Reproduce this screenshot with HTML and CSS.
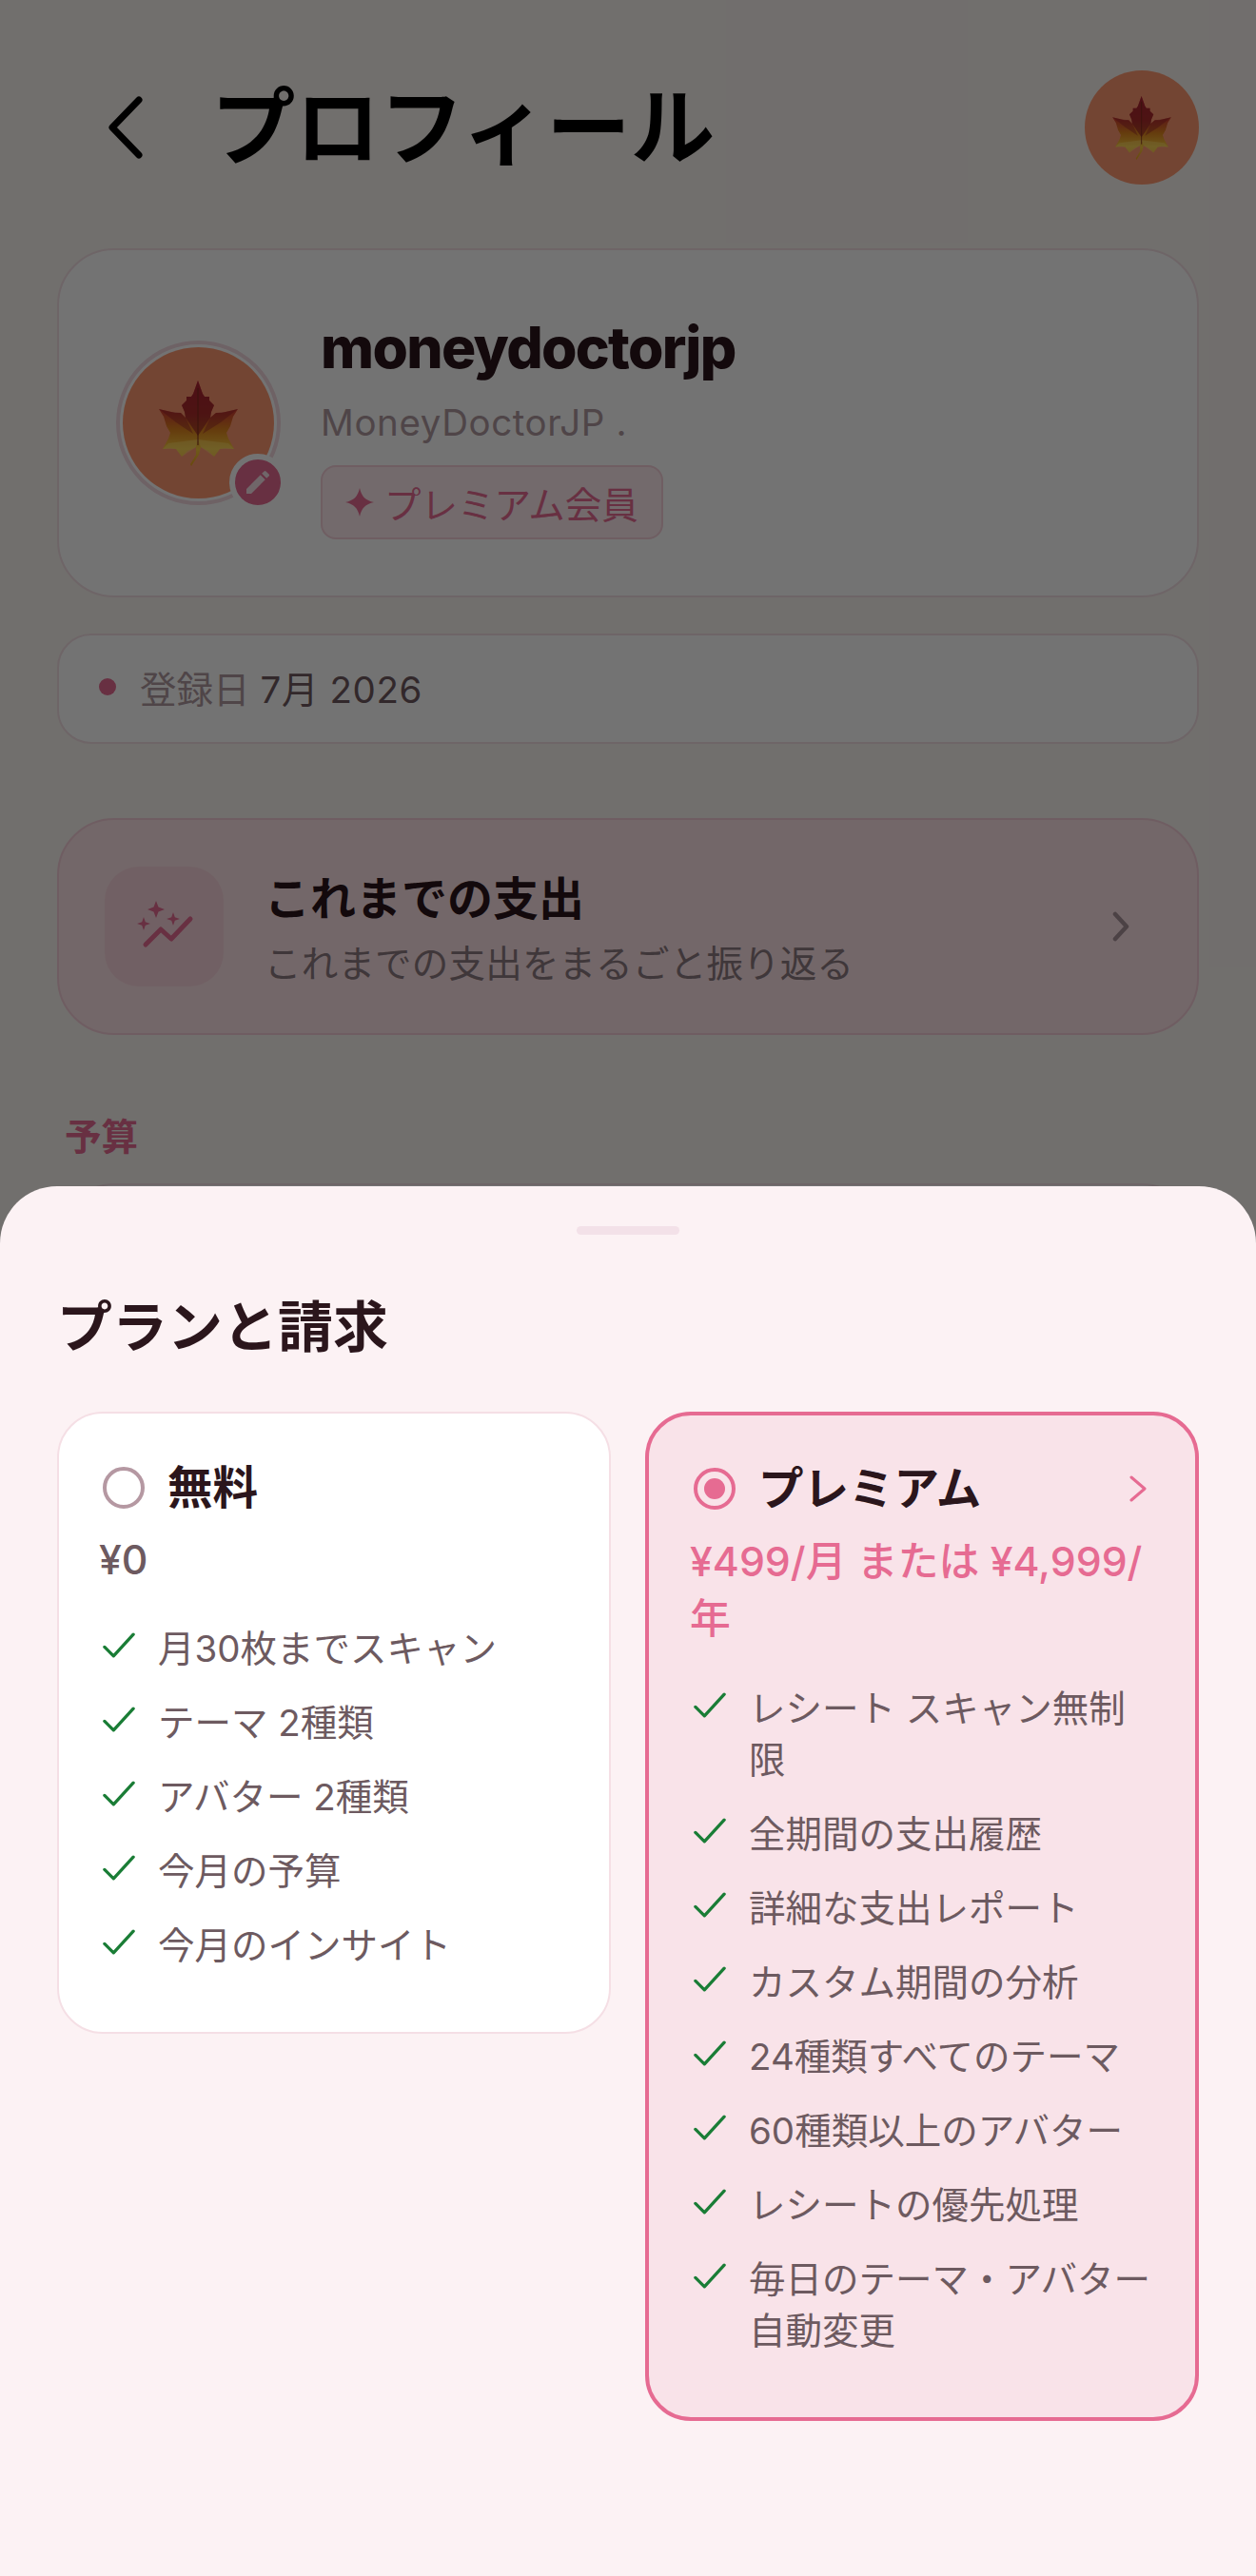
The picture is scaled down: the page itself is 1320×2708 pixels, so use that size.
FILE: index.html
```html
<!DOCTYPE html>
<html lang="ja">
<head>
	<meta charset="utf-8" />
	<title>プロフィール</title>
	<link rel="stylesheet" href="styles.css">
</head>
<body>
	<svg class="defs" width="0" height="0">
		<defs>
			<linearGradient id="leafFill" x1="0" y1="0" x2="0" y2="1">
				<stop offset="0" stop-color="#d8303f" />
				<stop offset=".38" stop-color="#d2452f" />
				<stop offset=".58" stop-color="#e0861f" />
				<stop offset=".8" stop-color="#f6c83e" />
				<stop offset="1" stop-color="#e8a020" />
			</linearGradient>
			<symbol id="leaf" viewBox="0 0 83 90">
				<path fill="url(#leafFill)" d="M41 0 46 14 48 17 53 17 53 21 58 26 55 33 54 39 60 34 66 34 70 33 83 30 78 38 75 48 71 55 73 61 79 72 70 71 64 72 58 80 52 74 44 70 42 78 36 87 34 90 33 88 39 78 39 70 30 74 24 80 18 72 12 71 4 72 10 61 12 55 8 48 5 38 0 30 13 33 17 34 23 34 28 39 27 33 24 26 29 21 29 17 34 17 36 14Z" />
				<path fill="#8f1a2a" opacity=".6" d="M41 0 46 14 48 17 53 17 53 21 58 26 55 33 54 39 41 58 28 39 27 33 24 26 29 21 29 17 34 17 36 14Z" />
				<path fill="#8f1a2a" opacity=".4" d="M0 30 13 33 23 34 28 39 36 56 18 44ZM83 30 70 33 60 34 54 39 46 56 65 44Z" />
				<path fill="#ffe070" opacity=".45" d="M41 62 73 66 79 72 64 72 58 80 44 70ZM41 62 10 66 4 72 18 72 24 80 39 70Z" />
				<path fill="none" stroke="#7a2a1c" stroke-width="1" d="M41 8V68" />
			</symbol>
		</defs>
	</svg>

	<main class="page">
		<header class="top">
			<svg class="back" viewBox="0 0 44 66"><path d="M36 4 8 33 36 62" /></svg>
			<h1 class="top-title">プロフィール</h1>
			<div class="avatar-small"><svg class="leaf-small"><use href="#leaf" /></svg></div>
		</header>

		<section class="card profile">
			<div class="avatar-ring">
				<div class="avatar-big"><svg class="leaf-big"><use href="#leaf" /></svg></div>
				<div class="edit-badge">
					<svg viewBox="0 0 24 24"><path d="M3 17.25V21h3.75L17.81 9.94l-3.75-3.75L3 17.25zM20.71 7.04a1 1 0 0 0 0-1.41l-2.34-2.34a1 1 0 0 0-1.41 0l-1.83 1.83 3.75 3.75 1.83-1.83z" /></svg>
				</div>
			</div>
			<div class="profile-info">
				<div class="profile-name">moneydoctorjp</div>
				<div class="profile-id">MoneyDoctorJP .</div>
				<div class="member-badge">
					<svg viewBox="0 0 30 30"><path d="M15 0C17 9 21 13 30 15 21 17 17 21 15 30 13 21 9 17 0 15 9 13 13 9 15 0Z" /></svg>
					<span>プレミアム会員</span>
				</div>
			</div>
		</section>

		<section class="card joined">
			<span class="joined-dot"></span>
			<span class="joined-label">登録日</span>
			<span class="joined-date">7月 2026</span>
		</section>

		<section class="card history">
			<div class="history-icon">
				<svg viewBox="0 0 64 64">
					<path class="spark" d="M23 5 25.500 11.500 32 14 25.500 16.500 23 23 20.500 16.500 14 14 20.500 11.500Z" />
					<path class="spark" d="M10 22 11.800 27.200 17 29 11.800 30.800 10 36 8.200 30.800 3 29 8.200 27.200Z" />
					<path class="spark" d="M41 17 42.800 22.200 48 24 42.800 25.800 41 31 39.200 25.800 34 24 39.200 22.200Z" />
					<path class="trend" d="M12 51 28 35 39 45 59 24" />
				</svg>
			</div>
			<div class="history-text">
				<div class="history-title">これまでの支出</div>
				<div class="history-sub">これまでの支出をまるごと振り返る</div>
			</div>
			<svg class="history-arrow" viewBox="0 0 18 32"><path d="M3 3 15 16 3 29" /></svg>
		</section>

		<h2 class="section-label">予算</h2>
		<section class="card budget"></section>
	</main>

	<div class="dim"></div>

	<aside class="sheet">
		<div class="handle"></div>
		<h2 class="sheet-title">プランと請求</h2>
		<div class="plans">
			<div class="plan">
				<div class="plan-head">
					<span class="radio"></span>
					<span class="plan-name">無料</span>
				</div>
				<div class="plan-price">¥0</div>
				<ul class="features">
					<li><svg class="check" viewBox="0 0 36 28"><path d="M2 16 12 26 34 2" /></svg><span>月30枚までスキャン</span></li>
					<li><svg class="check" viewBox="0 0 36 28"><path d="M2 16 12 26 34 2" /></svg><span>テーマ 2種類</span></li>
					<li><svg class="check" viewBox="0 0 36 28"><path d="M2 16 12 26 34 2" /></svg><span>アバター 2種類</span></li>
					<li><svg class="check" viewBox="0 0 36 28"><path d="M2 16 12 26 34 2" /></svg><span>今月の予算</span></li>
					<li><svg class="check" viewBox="0 0 36 28"><path d="M2 16 12 26 34 2" /></svg><span>今月のインサイト</span></li>
				</ul>
			</div>
			<div class="plan plan-active">
				<div class="plan-head">
					<span class="radio radio-on"></span>
					<span class="plan-name">プレミアム</span>
					<svg class="plan-arrow" viewBox="0 0 18 28"><path d="M2 2 16 14 2 26" /></svg>
				</div>
				<div class="plan-price">¥499/月 または ¥4,999/年</div>
				<ul class="features">
					<li><svg class="check" viewBox="0 0 36 28"><path d="M2 16 12 26 34 2" /></svg><span>レシート スキャン無制限</span></li>
					<li><svg class="check" viewBox="0 0 36 28"><path d="M2 16 12 26 34 2" /></svg><span>全期間の支出履歴</span></li>
					<li><svg class="check" viewBox="0 0 36 28"><path d="M2 16 12 26 34 2" /></svg><span>詳細な支出レポート</span></li>
					<li><svg class="check" viewBox="0 0 36 28"><path d="M2 16 12 26 34 2" /></svg><span>カスタム期間の分析</span></li>
					<li><svg class="check" viewBox="0 0 36 28"><path d="M2 16 12 26 34 2" /></svg><span>24種類すべてのテーマ</span></li>
					<li><svg class="check" viewBox="0 0 36 28"><path d="M2 16 12 26 34 2" /></svg><span>60種類以上のアバター</span></li>
					<li><svg class="check" viewBox="0 0 36 28"><path d="M2 16 12 26 34 2" /></svg><span>レシートの優先処理</span></li>
					<li><svg class="check" viewBox="0 0 36 28"><path d="M2 16 12 26 34 2" /></svg><span>毎日のテーマ・アバター自動変更</span></li>
				</ul>
			</div>
		</div>
	</aside>
</body>
</html>
```

FILE: styles.css
```css
* {
	padding: 0;
	margin: 0;
	box-sizing: border-box;
}
html, body {
	width: 1320px;
	height: 2708px;
	overflow: hidden;
}
body {
	position: relative;
	background: #fbf5f1;
	font-family: Inter, "Noto Sans CJK JP", sans-serif;
	color: #2b161c;
}
li {
	list-style: none;
}
.defs {
	position: absolute;
}

/* page under the sheet */
.page {
	padding: 74px 60px 0;
}
.top {
	display: flex;
	align-items: center;
	height: 120px;
	margin-bottom: 67px;
}
.back {
	width: 44px;
	height: 66px;
	margin-left: 50px;
	fill: none;
	stroke: #000;
	stroke-width: 7;
	stroke-linecap: round;
	stroke-linejoin: round;
}
.top-title {
	margin-left: 68px;
	font-size: 88.5px;
	font-weight: 700;
	line-height: 120px;
	color: #000;
}
.avatar-small {
	display: flex;
	align-items: center;
	justify-content: center;
	width: 120px;
	height: 120px;
	margin-left: auto;
	border-radius: 50%;
	background: #ff9a72;
}
.leaf-small {
	width: 62px;
	height: 67px;
}
.card {
	border: 2px solid #f3e0e5;
	background: #fff;
}
.profile {
	display: flex;
	align-items: center;
	height: 367px;
	padding: 0 0 0 60px;
	border-radius: 60px;
}
.avatar-ring {
	position: relative;
	flex: none;
	width: 173px;
	height: 173px;
	padding: 2px;
	border: 4px solid #f4d9e0;
	border-radius: 50%;
}
.avatar-big {
	display: flex;
	align-items: center;
	justify-content: center;
	width: 159px;
	height: 159px;
	margin: 1px;
	border-radius: 50%;
	background: #ff9a72;
}
.leaf-big {
	width: 83px;
	height: 90px;
}
.edit-badge {
	position: absolute;
	right: -10px;
	bottom: -10px;
	display: flex;
	align-items: center;
	justify-content: center;
	width: 60px;
	height: 60px;
	border: 6px solid #fff;
	border-radius: 50%;
	background: #e66b92;
}
.edit-badge svg {
	width: 32px;
	height: 32px;
	fill: #f9e3e9;
}
.profile-info {
	margin-left: 42px;
	padding-top: 8px;
}
.profile-name {
	font-size: 60.5px;
	font-weight: 800;
	line-height: 70px;
	letter-spacing: -1.7px;
}
.profile-id {
	margin-top: 21px;
	font-size: 38.5px;
	line-height: 46px;
	letter-spacing: .6px;
	color: #b09aa0;
}
.member-badge {
	display: flex;
	align-items: center;
	gap: 11px;
	width: 360px;
	height: 78px;
	margin-top: 22px;
	padding-left: 24px;
	border: 2px solid #f5d0da;
	border-radius: 16px;
	background: #ffeaef;
	font-size: 38.5px;
	color: #e66b92;
}
.member-badge svg {
	flex: none;
	width: 30px;
	height: 30px;
	fill: #e66b92;
}
.joined {
	display: flex;
	align-items: center;
	height: 116px;
	margin-top: 38px;
	padding: 0 0 5px 42px;
	border-radius: 36px;
	font-size: 38.5px;
}
.joined-dot {
	width: 18px;
	height: 18px;
	margin-right: 25px;
	border-radius: 50%;
	background: #e66b92;
}
.joined-label {
	color: #b09aa0;
}
.joined-date {
	margin-left: 11px;
	font-weight: 400;
	letter-spacing: .6px;
	color: #6f5a60;
}
.history {
	display: flex;
	align-items: center;
	height: 228px;
	margin-top: 78px;
	padding: 0 71px 0 48px;
	border-color: #f5cfd9;
	border-radius: 60px;
	background: #ffe4e8;
}
.history-icon {
	display: flex;
	align-items: center;
	justify-content: center;
	flex: none;
	width: 125px;
	height: 126px;
	border-radius: 36px;
	background: #fbd6de;
}
.history-icon svg {
	width: 64px;
	height: 64px;
}
.spark {
	fill: #e66b92;
}
.trend {
	fill: none;
	stroke: #e66b92;
	stroke-width: 5;
	stroke-linecap: round;
	stroke-linejoin: round;
}
.history-text {
	flex: 1;
	margin-left: 43px;
	padding-top: 5px;
}
.history-title {
	font-size: 48px;
	font-weight: 700;
	line-height: 62px;
}
.history-sub {
	margin-top: 11px;
	font-size: 38.5px;
	line-height: 52px;
	letter-spacing: .2px;
	color: #8d7a80;
}
.history-arrow {
	flex: none;
	width: 18px;
	height: 32px;
	fill: none;
	stroke: #a8929a;
	stroke-width: 4.5;
	stroke-linecap: round;
	stroke-linejoin: round;
}
.section-label {
	margin: 82px 0 0 8px;
	font-size: 38.5px;
	font-weight: 700;
	line-height: 50px;
	color: #e66b92;
}
.budget {
	height: 300px;
	margin-top: 24px;
	border-radius: 60px;
}

.dim {
	position: absolute;
	inset: 0;
	background: rgba(0, 0, 0, .55);
}

/* bottom sheet */
.sheet {
	position: absolute;
	left: 0;
	right: 0;
	bottom: 0;
	height: 1461px;
	padding: 42px 60px 0;
	border-radius: 60px 60px 0 0;
	background: #fcf2f4;
}
.handle {
	width: 108px;
	height: 9px;
	margin: 0 auto;
	border-radius: 5px;
	background: #f3e1e8;
}
.sheet-title {
	margin-top: 58px;
	font-size: 58px;
	font-weight: 700;
	line-height: 78px;
}
.plans {
	display: grid;
	grid-template-columns: 582px 582px;
	gap: 36px;
	align-items: start;
	margin-top: 50px;
}
.plan {
	height: 654px;
	padding: 48px 42px 0;
	border: 2px solid #f5dfe5;
	border-radius: 48px;
	background: #fff;
}
.plan-active {
	height: 1061px;
	padding: 47px 43px 0;
	border: 4px solid #e66b92;
	background: #f9e3e9;
}
.plan-head {
	display: flex;
	align-items: center;
	height: 60px;
}
.radio {
	flex: none;
	width: 44px;
	height: 44px;
	margin-left: 4px;
	border: 4px solid #b598a2;
	border-radius: 50%;
}
.radio-on {
	padding: 7px;
	border-color: #e66b92;
	background: #e66b92;
	background-clip: content-box;
}
.plan-name {
	margin-left: 24px;
	font-size: 47.5px;
	font-weight: 700;
	line-height: 60px;
}
.plan-arrow {
	width: 18px;
	height: 28px;
	margin-left: auto;
	margin-right: 8px;
	fill: none;
	stroke: #e66b92;
	stroke-width: 3;
	stroke-linecap: round;
	stroke-linejoin: round;
}
.plan-price {
	margin-top: 16px;
	font-size: 42.8px;
	font-weight: 500;
	line-height: 60px;
	color: #6d5a60;
}
.plan-active .plan-price {
	margin-top: 17px;
	color: #e66b92;
}
.features {
	display: flex;
	flex-direction: column;
	gap: 24px;
	margin-top: 36px;
}
.plan-active .features {
	margin-top: 37px;
}
.features li {
	display: flex;
	font-size: 38.5px;
	line-height: 54px;
	color: #6d5a60;
}
.check {
	flex: none;
	width: 34px;
	height: 27px;
	margin: 10px 24px 0 4px;
	fill: none;
	stroke: #1a7d36;
	stroke-width: 3.5;
	stroke-linecap: round;
	stroke-linejoin: round;
}
```
